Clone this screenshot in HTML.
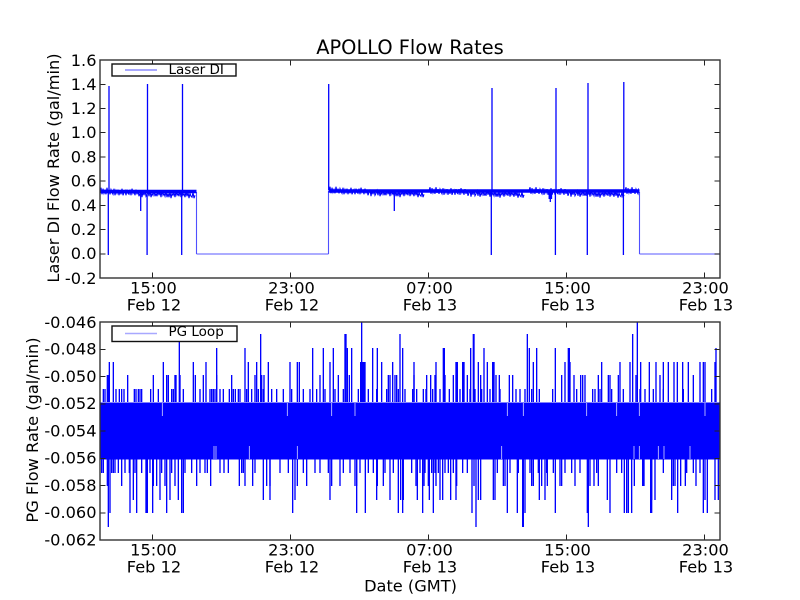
<!DOCTYPE html>
<html>
<head>
<meta charset="utf-8">
<title>APOLLO Flow Rates</title>
<style>
html,body{margin:0;padding:0;background:#fff;}
svg{display:block;}
text{font-family:"DejaVu Sans",sans-serif;fill:#000;font-size:16.2px;}
.yt{text-anchor:end;}
.xt{text-anchor:middle;}
.lg{font-size:13.5px;}
</style>
</head>
<body>
<svg width="800" height="600" viewBox="0 0 800 600" xmlns="http://www.w3.org/2000/svg">
<defs>
<path id="j" fill="none" stroke="#00f" stroke-width="1.1" d="M0 0l1-4 1 7 1-6 1 5 1-3 1 4 1-7 1 6 1-4 1 5 1-5 1 3 1 2 1-6 1 7 1-5 1 3 1-4 1 6 1-5 1 4 1-6 1 7 1-3 1-2 1 5 1-6 1 4 1 1 1-5 1 6 1-7 1 5 1-2 1 4 1-6 1 5 1-4 1 6 1-3 1-3 1 7 1-6 1 4 1-5 1 6 1-2 1-3 1 5 1-6 1 7 1-4 1 2 1-5 1 6 1-3 1 3 1-6 1 5 1-4 1 6 1-7 1 5 1-2 1 3 1-5 1 6 1-4 1 4 1-6 1 7 1-5 1 2 1-3 1 5 1-6 1 4 1-2 1 3 1-6 1 7 1-5 1 3 1-2 1 4 1-6 1 5 1-4 1 6 1-5 1 3 1 1 1-5 1 6 1-3"/>
<clipPath id="c1"><rect x="100" y="60" width="97" height="218"/></clipPath>
<clipPath id="c2"><rect x="328" y="60" width="311" height="218"/></clipPath>
</defs>
<rect width="800" height="600" fill="#fff"/>

<!-- TOP PLOT DATA -->
<path d="M196.500 254H328.500M639.500 254H720" stroke="#7a7aff" stroke-width="1.2" fill="none"/>
<path d="M196.500 192V254M328.500 191V254M639.500 192V254" stroke="#5050ff" stroke-width="1.1" fill="none"/>
<path d="M100 191.500H196.500M328.500 191H639.500" stroke="#00f" stroke-width="3.500" fill="none"/>
<g clip-path="url(#c1)"><use href="#j" transform="translate(100 191.500) scale(1 .95)"/></g>
<g clip-path="url(#c2)"><use href="#j" transform="translate(329 190.500) scale(1 .95)"/><use href="#j" transform="translate(429 191) scale(1 .95)"/><use href="#j" transform="translate(529 191) scale(1 .95)"/><use href="#j" transform="translate(625 191) scale(1 .95)"/></g>
<path d="M109 86V190M147.500 84V190M182.500 84V190M328.700 84V190M492 88V190M556 88V190M588 83V190M623.800 82V190M108.300 190V255M147.100 190V255M181.700 190V255M491.300 190V255M555.400 190V255M587.300 190V255M623.400 190V255M140.700 190V211M394.300 190V211M550.300 190V202M549.200 190V199M551.500 190V199" stroke="#00f" stroke-width="1.300" fill="none"/>

<!-- BOTTOM PLOT DATA -->
<rect x="100" y="402.500" width="620" height="57" fill="#00f"/>
<g fill="none" stroke="#00f" stroke-width="4" transform="translate(90 0) scale(.33333 1)">
<path d="M40 389V402M45 389V402M78 389V402M88 389V402M95 389V402M102 389V402M133 389V402M138 389V402M145 389V402M150 389V402M155 389V402M182 389V402M205 389V402M245 389V402M250 389V402M280 389V402M330 389V402M360 389V402M365 389V402M370 389V402M375 389V402M390 389V402M400 389V402M418 389V402M430 389V402M436 389V402M445 389V402M450 389V402M470 389V402M485 389V402M505 389V402M520 389V402M545 389V402M560 389V402M580 389V402M605 389V402M640 389V402M660 389V402M680 389V402M705 389V402M735 389V402M760 389V402M805 389V402M835 389V402M860 389V402M890 389V402M925 389V402M945 389V402"/>
<path d="M52 375V402M55 375V402M113 375V402M190 375V402M230 375V402M235 375V402M255 375V402M258 375V402M270 375V402M316 375V402M340 375V402M380 375V402M425 375V402M495 375V402M515 375V402M522 375V402M690 375V402M745 375V402M778 375V402M895 375V402M900 375V402M915 375V402M920 375V402"/>
<path d="M58 362V402M70 362V402M220 362V402M310 362V402M348 362V402M475 362V402M500 362V402M535 362V402M600 362V402M622 362V402M628 362V402M720 362V402M812 362V402M815 362V402M818 362V402M822 362V402M825 362V402M875 362V402M908 362V402"/>
<path d="M380 348V402M465 348V402M668 348V402M700 348V402M730 348V402M772 348V402M785 348V402M848 348V402M862 348V402M938 348V402"/>
<path d="M268 341V402M512 334V402M765 334V402M768 334V402M930 334V402M815 322V402"/>
<path d="M35 473V459M40 473V459M65 473V459M70 473V459M75 473V459M85 473V459M105 473V459M118 473V459M135 473V459M155 473V459M180 473V459M215 473V459M245 473V459M285 473V459M305 473V459M330 473V459M345 473V459M352 473V459M390 473V459M402 473V459M415 473V459M455 473V459M460 473V459M495 473V459M570 473V459M595 473V459M640 473V459M675 473V459M690 473V459M715 473V459M760 473V459M780 473V459M810 473V459M835 473V459M850 473V459M885 473V459M910 473V459"/>
<path d="M52 486V459M95 486V459M190 486V459M200 486V459M225 486V459M255 486V459M320 486V459M362 486V459M448 486V459M465 486V459M488 486V459M530 486V459M540 486V459M622 486V459M650 486V459M725 486V459M750 486V459M795 486V459M800 486V459M862 486V459M880 486V459"/>
<path d="M130 500V459M210 500V459M240 500V459M265 500V459M520 500V459M540 500V459M615 500V459M720 500V459M860 500V459M900 500V459M940 500V459M932 500V459"/>
<path d="M60 513V459M120 513V459M140 513V459M168 513V459M172 513V459M188 513V459M230 513V459M275 513V459M280 513V459M608 513V459M800 513V459M826 513V459M925 513V459M938 513V459M55 527V459"/>
</g>
<g fill="none" stroke="#00f" stroke-width="4" transform="translate(410 0) scale(.33333 1)">
<path d="M8 389V402M20 389V402M40 389V402M48 389V402M68 389V402M90 389V402M118 389V402M150 389V402M180 389V402M195 389V402M215 389V402M240 389V402M270 389V402M318 389V402M330 389V402M345 389V402M365 389V402M388 389V402M428 389V402M500 389V402M548 389V402M555 389V402M570 389V402M605 389V402M640 389V402M690 389V402M705 389V402M730 389V402M760 389V402M820 389V402M905 389V402"/>
<path d="M12 375V402M50 375V402M62 375V402M75 375V402M105 375V402M130 375V402M172 375V402M212 375V402M258 375V402M268 375V402M298 375V402M308 375V402M455 375V402M492 375V402M512 375V402M518 375V402M525 375V402M565 375V402M595 375V402M600 375V402M625 375V402M678 375V402M750 375V402M850 375V402"/>
<path d="M12 362V402M78 362V402M138 362V402M142 362V402M158 362V402M162 362V402M205 362V402M232 362V402M248 362V402M252 362V402M370 362V402M465 362V402M480 362V402M575 362V402M630 362V402M660 362V402M692 362V402M718 362V402M738 362V402M760 362V402M775 362V402M792 362V402M802 362V402M818 362V402M835 362V402M870 362V402M880 362V402M885 362V402M915 362V402"/>
<path d="M100 348V402M103 348V402M182 348V402M222 348V402M358 348V402M380 348V402M436 348V402M475 348V402M478 348V402M918 348V402"/>
<path d="M190 334V402M192 334V402M352 334V402M668 334V402M682 322V402"/>
<path d="M5 473V459M30 473V459M45 473V459M65 473V459M75 473V459M85 473V459M105 473V459M115 473V459M130 473V459M158 473V459M172 473V459M262 473V459M300 473V459M325 473V459M360 473V459M385 473V459M410 473V459M430 473V459M465 473V459M485 473V459M510 473V459M560 473V459M620 473V459M635 473V459M700 473V459M760 473V459M830 473V459M850 473V459M870 473V459"/>
<path d="M18 486V459M42 486V459M55 486V459M78 486V459M140 486V459M192 486V459M280 486V459M285 486V459M365 486V459M370 486V459M395 486V459M412 486V459M450 486V459M455 486V459M495 486V459M540 486V459M552 486V459M565 486V459M673 486V459M698 486V459M702 486V459M790 486V459M795 486V459M812 486V459M826 486V459M858 486V459"/>
<path d="M22 500V459M58 500V459M90 500V459M98 500V459M122 500V459M138 500V459M205 500V459M212 500V459M250 500V459M255 500V459M388 500V459M405 500V459M592 500V459M725 500V459M735 500V459M785 500V459M885 500V459M915 500V459M925 500V459"/>
<path d="M38 513V459M70 513V459M186 513V459M292 513V459M322 513V459M345 513V459M436 513V459M532 513V459M600 513V459M643 513V459M650 513V459M655 513V459M665 513V459M722 513V459M725 513V459M803 513V459M880 513V459M892 513V459M198 527V459M340 527V459M338 527V459M535 527V459"/>
</g>
<!-- white gaps in band -->
<g stroke="#fff" stroke-width="2.500" fill="none" opacity=".8" transform="translate(90 0) scale(.33333 1)">
<path d="M217 403V416M592 403V416M725 403V416M795 403V416M372 446V459M378 446V459M478 446V459M622 446V459"/>
</g>
<g stroke="#fff" stroke-width="2.500" fill="none" opacity=".8" transform="translate(410 0) scale(.33333 1)">
<path d="M292 403V416M340 403V416M530 403V416M620 403V416M688 403V416M885 403V416M275 446V459M672 446V459M688 446V459M745 446V459M762 446V459M840 446V459"/>
</g>

<!-- TICKS -->
<g stroke="#222" stroke-width="1" fill="none">
<path d="M152.500 60v5.500M290.500 60v5.500M428.500 60v5.500M566.500 60v5.500M704.500 60v5.500M152.500 278v-5.500M290.500 278v-5.500M428.500 278v-5.500M566.500 278v-5.500M704.500 278v-5.500"/>
<path d="M100 84.500h5.500M100 108.500h5.500M100 132.500h5.500M100 157h5.500M100 181h5.500M100 205.500h5.500M100 229.500h5.500M100 254h5.500M720 84.500h-5.500M720 108.500h-5.500M720 132.500h-5.500M720 157h-5.500M720 181h-5.500M720 205.500h-5.500M720 229.500h-5.500M720 254h-5.500"/>
<path d="M152.500 322v5.500M290.500 322v5.500M428.500 322v5.500M566.500 322v5.500M704.500 322v5.500M152.500 540v-5.500M290.500 540v-5.500M428.500 540v-5.500M566.500 540v-5.500M704.500 540v-5.500"/>
<path d="M100 349.500h5.500M100 376.500h5.500M100 404h5.500M100 431h5.500M100 458.500h5.500M100 485.500h5.500M100 513h5.500M720 349.500h-5.500M720 376.500h-5.500M720 404h-5.500M720 431h-5.500M720 458.500h-5.500M720 485.500h-5.500M720 513h-5.500"/>
</g>

<!-- FRAMES -->
<rect x="100" y="60" width="620" height="218" fill="none" stroke="#333" stroke-width="1.400"/>
<rect x="100" y="322" width="620" height="218" fill="none" stroke="#333" stroke-width="1.400"/>

<!-- LEGENDS -->
<rect x="112" y="64" width="124" height="12" fill="#fff" stroke="#111" stroke-width="1.400"/>
<path d="M125 70H157" stroke="#5050ff" stroke-width="1"/>
<text class="lg" x="168.500" y="74">Laser DI</text>
<rect x="112" y="326" width="125" height="15.500" fill="#fff" stroke="#111" stroke-width="1.400"/>
<path d="M125 333.500H157" stroke="#a8a8ff" stroke-width="1.500"/>
<text class="lg" x="168.500" y="336">PG Loop</text>

<!-- Y TICK LABELS -->
<text class="yt" x="96.500" y="66">1.6</text>
<text class="yt" x="96.500" y="90">1.4</text>
<text class="yt" x="96.500" y="114">1.2</text>
<text class="yt" x="96.500" y="138">1.0</text>
<text class="yt" x="96.500" y="162.500">0.8</text>
<text class="yt" x="96.500" y="186.500">0.6</text>
<text class="yt" x="96.500" y="211">0.4</text>
<text class="yt" x="96.500" y="235">0.2</text>
<text class="yt" x="96.500" y="259">0.0</text>
<text class="yt" x="96.500" y="284">-0.2</text>
<text class="yt" x="96.500" y="328">-0.046</text>
<text class="yt" x="96.500" y="354.500">-0.048</text>
<text class="yt" x="96.500" y="382">-0.050</text>
<text class="yt" x="96.500" y="409">-0.052</text>
<text class="yt" x="96.500" y="436.500">-0.054</text>
<text class="yt" x="96.500" y="463.500">-0.056</text>
<text class="yt" x="96.500" y="491">-0.058</text>
<text class="yt" x="96.500" y="518">-0.060</text>
<text class="yt" x="96.500" y="545.500">-0.062</text>

<!-- X TICK LABELS -->
<text class="xt" x="153.500" y="293.500">15:00</text><text class="xt" x="154" y="310.500">Feb 12</text>
<text class="xt" x="291.500" y="293.500">23:00</text><text class="xt" x="292" y="310.500">Feb 12</text>
<text class="xt" x="429.500" y="293.500">07:00</text><text class="xt" x="430" y="310.500">Feb 13</text>
<text class="xt" x="567.500" y="293.500">15:00</text><text class="xt" x="568" y="310.500">Feb 13</text>
<text class="xt" x="705.500" y="293.500">23:00</text><text class="xt" x="706" y="310.500">Feb 13</text>
<text class="xt" x="153.500" y="555.500">15:00</text><text class="xt" x="154" y="572.500">Feb 12</text>
<text class="xt" x="291.500" y="555.500">23:00</text><text class="xt" x="292" y="572.500">Feb 12</text>
<text class="xt" x="429.500" y="555.500">07:00</text><text class="xt" x="430" y="572.500">Feb 13</text>
<text class="xt" x="567.500" y="555.500">15:00</text><text class="xt" x="568" y="572.500">Feb 13</text>
<text class="xt" x="705.500" y="555.500">23:00</text><text class="xt" x="706" y="572.500">Feb 13</text>

<!-- LABELS -->
<text class="xt" x="410" y="54" style="font-size:19.4px">APOLLO Flow Rates</text>
<text class="xt" x="410.500" y="591.500">Date (GMT)</text>
<text class="xt" transform="translate(59 168) rotate(-90)">Laser DI Flow Rate (gal/min)</text>
<text class="xt" transform="translate(38 430) rotate(-90)">PG Flow Rate (gal/min)</text>
</svg>
</body>
</html>
